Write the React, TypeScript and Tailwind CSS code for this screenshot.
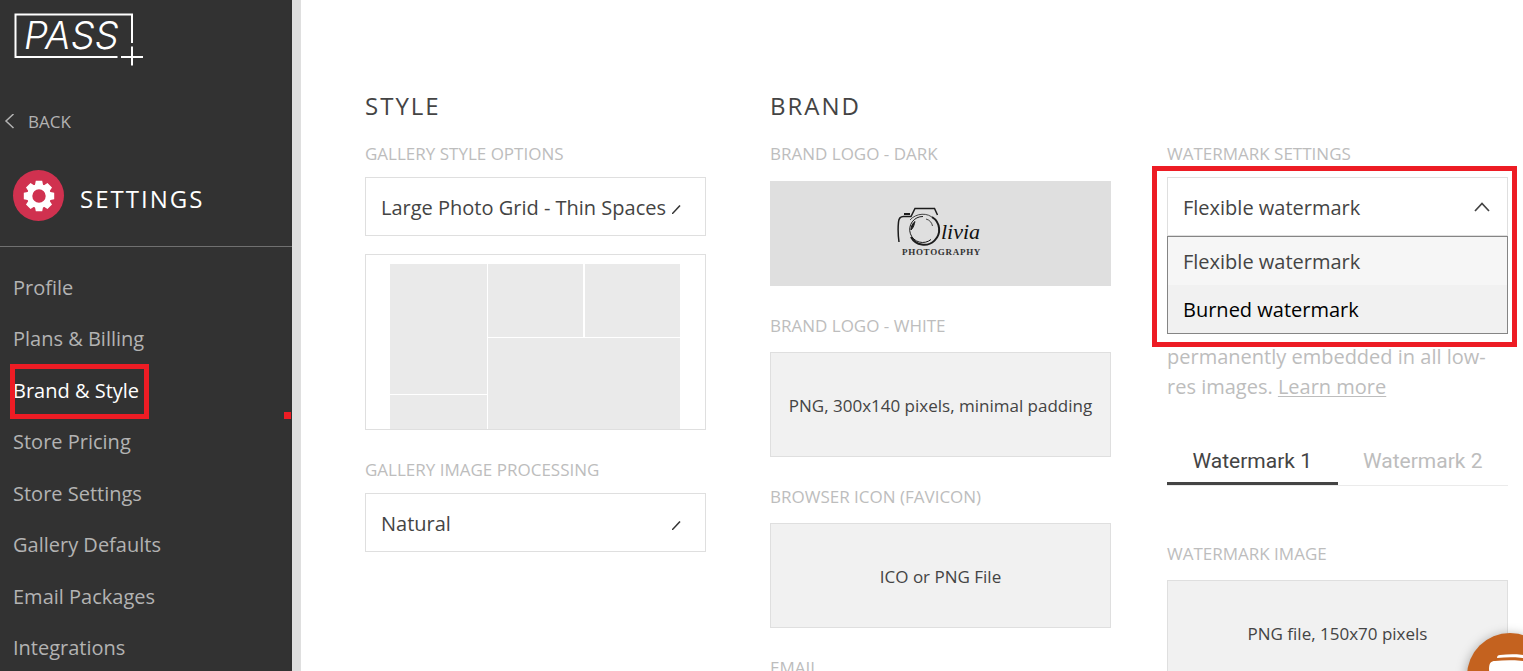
import React from 'react';

const NAV_ITEMS = [
    'Profile',
    'Plans & Billing',
    'Brand & Style',
    'Store Pricing',
    'Store Settings',
    'Gallery Defaults',
    'Email Packages',
    'Integrations',
];

const WATERMARK_TYPES = ['Flexible watermark', 'Burned watermark'];

const PassLogo: React.FC = () => (
    <svg width="132" height="56" viewBox="0 0 132 56" fill="none" stroke="#fff" strokeWidth="2" role="img" aria-label="PASS+">
        <path d="M119 31V2.500H2.500v42.500h102" />
        <path d="M119 34.500v19M108 45h22" />
        <text x="11" y="37" fontSize="38" fontWeight="300" fontStyle="italic" fill="#fff" stroke="none" className="font-['Inter',sans-serif]">PASS</text>
    </svg>
);

const GearIcon: React.FC = () => (
    <svg width="32" height="32" viewBox="-16 -16 32 32" fill="#fff" aria-hidden="true">
        {[0, 45, 90, 135].map(angle => (
            <path key={angle} d="M-3.200-15.200h6.400l1 5h-8.400zM-3.200 15.200h6.400l1-5h-8.400z" transform={`rotate(${angle})`} />
        ))}
        <path fillRule="evenodd" d="M0-12a12 12 0 1 1 0 24a12 12 0 1 1 0-24zM0-6.700a6.700 6.700 0 1 0 0 13.400a6.700 6.700 0 1 0 0-13.400z" />
    </svg>
);

const OliviaLogo: React.FC = () => (
    <svg width="88" height="58" viewBox="0 0 88 58" fill="none" stroke="#1c1c1c" role="img" aria-label="Olivia Photography">
        <path d="M2 37c-1-7-1-15-.5-20 .3-4 2-5.500 5-5.500H14l4-8h19.500l3 6.500" strokeWidth="1.500" />
        <path d="M7 9h6" strokeWidth="2" />
        <path d="M13 15c6-7 18-8 24-1" strokeWidth=".8" />
        <path d="M35 12a15 15 0 1 1-21 20" strokeWidth="2" />
        <path d="M26 11.500a13 13 0 1 0 8 23" strokeWidth="1" />
        <path d="M14 25c0-4 1.500-6.500 4-8.500-1 3-1 5.500-4 8.500z" fill="#1c1c1c" strokeWidth="1" />
        <path d="M29 14c4 1 6 4 6.500 7" strokeWidth=".8" />
        <text x="44" y="34" fontSize="22" fontStyle="italic" fill="#111" stroke="none" className="font-['Liberation_Serif',serif]">livia</text>
        <text x="5" y="50" fontSize="9" fontWeight="700" letterSpacing=".7" fill="#333" stroke="none" className="font-['Liberation_Serif',serif]">PHOTOGRAPHY</text>
    </svg>
);

const labelClass = 'block text-[17px] leading-6 text-[#bdbdbd] whitespace-nowrap';
const selectClass = 'block w-full h-[59px] appearance-none border border-[#dfdfdf] bg-white px-[15px] pt-0.5 text-xl text-[#444]';

type SelectFieldProps = {
    id: string;
    label: string;
    options: string[];
};

const SelectField: React.FC<SelectFieldProps> = ({ id, label, options }) => (
    <div>
        <label htmlFor={id} className={labelClass}>{label}</label>
        <div className="relative mt-[11px]">
            <select id={id} className={selectClass}>
                {options.map(o => <option key={o}>{o}</option>)}
            </select>
            <svg className="absolute right-[25px] top-7 pointer-events-none" width="9" height="9" viewBox="0 0 9 9" stroke="#333" strokeWidth="1.500" fill="none">
                <path d="M0 9l8-8.500" />
            </svg>
        </div>
    </div>
);

const UploadField: React.FC<{ label: string; hint: string }> = ({ label, hint }) => (
    <div className="mb-7">
        <h3 className={labelClass}>{label}</h3>
        <button className="mt-3.5 flex h-[105px] w-full items-center justify-center border border-[#dfdfdf] bg-[#f1f1f1] pt-0.5 text-[17px] text-[#444] whitespace-nowrap">
            {hint}
        </button>
    </div>
);

const GalleryPreview: React.FC = () => (
    <div className="mt-[18px] flex h-44 gap-px overflow-hidden border border-[#dfdfdf] bg-white pl-6 pr-[25px] pt-[9px]">
        <div className="flex flex-1 flex-col gap-px">
            <div className="h-[130px] bg-[#eaeaea]" />
            <div className="flex-1 bg-[#eaeaea]" />
        </div>
        <div className="flex w-48 flex-col gap-px">
            <div className="flex h-[73px] gap-0.5">
                <div className="flex-1 bg-[#eaeaea]" />
                <div className="flex-1 bg-[#eaeaea]" />
            </div>
            <div className="flex-1 bg-[#eaeaea]" />
        </div>
    </div>
);

const Sidebar: React.FC = () => (
    <aside className="relative w-[301px] shrink-0 border-r-[9px] border-[#dfdfdf] bg-[#323232] text-[#b3b3b3]">
        <div className="px-[13px] pt-3">
            <PassLogo />
        </div>
        <a href="#back" className="mt-[42px] flex h-6 items-center gap-[13px] pl-1 text-[17px]">
            <svg width="11" height="16" viewBox="0 0 11 16" fill="none" stroke="currentColor" strokeWidth="1.500">
                <path d="M9.500 0L2 7l7.500 7" />
            </svg>
            BACK
        </a>
        <div className="mt-9 flex h-[77px] gap-4 border-b border-[#707070] pl-[13px]">
            <span className="flex size-[51px] items-center justify-center rounded-full bg-[#d0314f]">
                <GearIcon />
            </span>
            <h1 className="pt-[13px] text-2xl tracking-[2px] text-white">SETTINGS</h1>
        </div>
        <nav className="mt-[15px] grid h-[412px] auto-rows-fr">
            {NAV_ITEMS.map(item => {
                const active = item === 'Brand & Style';
                return (
                    <a key={item} href="#settings" className={`flex items-center pl-[13px] text-xl ${active ? 'text-white' : ''}`}>
                        <span className="relative">
                            {active && <span className="absolute -left-[3px] -right-2.5 -top-[13px] -bottom-3.5 border-5 border-[#ed1c24]" />}
                            {item}
                        </span>
                    </a>
                );
            })}
        </nav>
        <span className="absolute right-px top-[412px] size-[7px] bg-[#ed1c24]" />
    </aside>
);

const WatermarkSelect: React.FC = () => (
    <div>
        <label htmlFor="watermark-type" className={labelClass}>WATERMARK SETTINGS</label>
        <div className="relative mt-[11px]">
            <select id="watermark-type" className={selectClass}>
                {WATERMARK_TYPES.map(o => <option key={o}>{o}</option>)}
            </select>
            <svg className="absolute right-[17px] top-[23px] pointer-events-none" width="18" height="14" viewBox="0 0 18 14" fill="none" stroke="#444" strokeWidth="1.700">
                <path d="M2 11l7-7.500 7 7.500" />
            </svg>
            <ul role="listbox" aria-label="Watermark type" className="absolute inset-x-0 top-full z-10 border border-[#858585] bg-[#f1f1f1] text-xl">
                <li role="option" aria-selected="true" className="flex h-12 items-center bg-[#f6f6f6] px-[15px] pt-0.5 text-[#444]">{WATERMARK_TYPES[0]}</li>
                <li role="option" aria-selected="false" className="flex h-12 items-center px-[15px] pt-0.5 text-black">{WATERMARK_TYPES[1]}</li>
            </ul>
            <span className="absolute -left-[15px] -right-[9px] -top-[11px] z-20 h-[181px] border-5 border-[#ed1c24] pointer-events-none" />
        </div>
    </div>
);

const App: React.FC = () => {
    return (
        <div className="flex h-screen overflow-hidden bg-white font-['Open_Sans','Noto_Sans',sans-serif]">
            <Sidebar />
            <main className="flex flex-1 pl-16 pr-[15px] pt-[90px]">
                <section className="flex-1">
                    <h2 className="mb-5 text-2xl tracking-[2px] text-[#444]">STYLE</h2>
                    <SelectField id="gallery-style" label="GALLERY STYLE OPTIONS" options={['Large Photo Grid - Thin Spaces']} />
                    <GalleryPreview />
                    <div className="mt-7">
                        <SelectField id="image-processing" label="GALLERY IMAGE PROCESSING" options={['Natural']} />
                    </div>
                </section>

                <section className="ml-16 flex-1">
                    <h2 className="mb-5 text-2xl tracking-[2px] text-[#444]">BRAND</h2>
                    <div className="mb-7">
                        <h3 className={labelClass}>BRAND LOGO - DARK</h3>
                        <div className="mt-[15px] flex h-[105px] items-center justify-center bg-[#dfdfdf]">
                            <OliviaLogo />
                        </div>
                    </div>
                    <UploadField label="BRAND LOGO - WHITE" hint="PNG, 300x140 pixels, minimal padding" />
                    <UploadField label="BROWSER ICON (FAVICON)" hint="ICO or PNG File" />
                    <h3 className={labelClass}>EMAIL</h3>
                </section>

                <section className="ml-14 flex-1 pt-[52px]">
                    <WatermarkSelect />
                    <p className="mt-[106px] text-xl leading-[30px] text-[#bdbdbd]">
                        permanently embedded in all low-res images. <a href="#learn-more" className="underline underline-offset-2 decoration-1">Learn more</a>
                    </p>
                    <div role="tablist" className="mt-9 mb-14 flex h-12 border-b border-[#ebebeb] font-['Roboto',sans-serif] text-[21px]">
                        <button role="tab" aria-selected="true" className="flex-1 border-b-3 border-[#444] pt-1 text-[#444]">Watermark 1</button>
                        <button role="tab" aria-selected="false" className="flex-1 border-b-3 border-transparent pt-1 text-[#bdbdbd]">Watermark 2</button>
                    </div>
                    <UploadField label="WATERMARK IMAGE" hint="PNG file, 150x70 pixels" />
                </section>
            </main>

            <button aria-label="Help" className="fixed -bottom-12 -right-[30px] z-30 size-[86px] rounded-full bg-[#c4621f] shadow-[0_2px_12px_rgba(0,0,0,0.35)]">
                <svg width="86" height="86" viewBox="0 0 86 86" fill="#fff">
                    <path d="M30 25c0-2 1-3 3-3 10-1 20-1 30 1v3c-11-2-22-2-33-1z" />
                    <path d="M22 36c0-6 2-8 6-8 11-1 24-1 36 1v34H24z" />
                </svg>
            </button>
        </div>
    );
};

export default App;
